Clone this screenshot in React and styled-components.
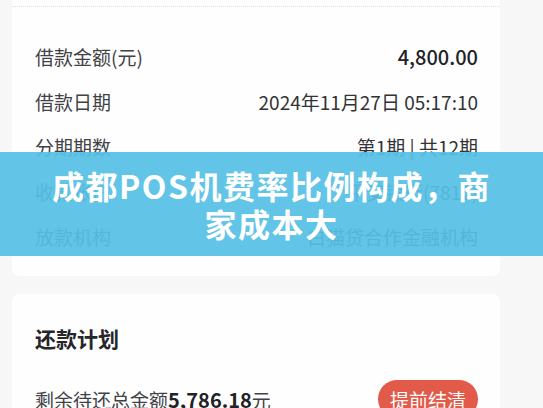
import React from "react";
import styled, { createGlobalStyle } from "styled-components";

const GlobalStyle = createGlobalStyle`
  html, body {
    margin: 0;
    padding: 0;
    background: #f7f7f8;
    font-family: "Noto Sans CJK SC", "Noto Sans", "Liberation Sans", sans-serif;
  }
`;

const loanRows = [
  { label: "借款金额(元)", value: "4,800.00", strong: true },
  { label: "借款日期", value: "2024年11月27日 05:17:10" },
  { label: "分期期数", value: "第1期 | 共12期" },
  { label: "收款账户", value: "平安银行(7812)" },
  { label: "放款机构", value: "白猫贷合作金融机构" },
];

export default function App() {
  return (
    <>
      <GlobalStyle />
      <Page>
        <Card $bottom={17}>
          <Divider />
          {loanRows.map((r) => (
            <InfoRow key={r.label}>
              <Label>{r.label}</Label>
              <Value $strong={r.strong}>{r.value}</Value>
            </InfoRow>
          ))}
        </Card>

        <Card $top={29} $bottom={0} $gap>
          <SectionTitle>还款计划</SectionTitle>
          <PlanRow>
            <Label>
              剩余待还总金额<Amount>5,786.18</Amount>元
            </Label>
            <SettleButton>提前结清</SettleButton>
          </PlanRow>
        </Card>

        <Banner>
          <BannerTitle>成都POS机费率比例构成，商家成本大</BannerTitle>
        </Banner>
      </Page>
    </>
  );
}

const Page = styled.div`
  position: relative;
  width: 543px;
  height: 408px;
  overflow: hidden;
  box-sizing: border-box;
  padding: 0 43px 0 12px;
  display: flex;
  flex-direction: column;
  gap: 18px;
`;

const Card = styled.div`
  background: #fefefe;
  border-radius: 0 0 8px 8px;
  padding: ${(p) => p.$top || 0}px 22px ${(p) => p.$bottom}px 23px;
  display: flex;
  flex-direction: column;
  flex-shrink: 0;
  ${(p) => p.$gap && "border-radius: 8px; gap: 27px;"}
`;

const Divider = styled.div`
  margin: 6px -22px 27px -23px;
  border-top: 1px dotted #e0e0e0;
`;

const InfoRow = styled.div`
  height: 45px;
  display: flex;
  align-items: center;
  justify-content: space-between;
`;

const Label = styled.span`
  font-size: 19px;
  color: #424246;
`;

const Value = styled.span`
  font-size: ${(p) => (p.$strong ? "20px" : "19px")};
  font-weight: ${(p) => (p.$strong ? 500 : 400)};
  color: ${(p) => (p.$strong ? "#222226" : "#333336")};
`;

const SectionTitle = styled.div`
  font-size: 21px;
  line-height: 30px;
  font-weight: 700;
  color: #26262a;
`;

const PlanRow = styled.div`
  height: 38px;
  display: flex;
  align-items: center;
  justify-content: space-between;
`;

const Amount = styled.span`
  font-size: 20px;
  font-weight: 600;
  color: #222226;
`;

const SettleButton = styled.button`
  width: 100px;
  height: 38px;
  border: none;
  border-radius: 19px;
  background: #e25a49;
  color: #ffffff;
  font-family: inherit;
  font-size: 19px;
  padding: 0;
`;

const Banner = styled.div`
  position: absolute;
  left: 0;
  right: 0;
  top: 152px;
  height: 104px;
  background: rgba(86, 191, 228, 0.93);
  display: flex;
  align-items: center;
  justify-content: center;
`;

const BannerTitle = styled.h1`
  margin: 0;
  width: 460px;
  text-align: center;
  font-size: 32px;
  line-height: 38px;
  font-weight: 700;
  color: #ffffff;
  letter-spacing: 1.5px;
`;
